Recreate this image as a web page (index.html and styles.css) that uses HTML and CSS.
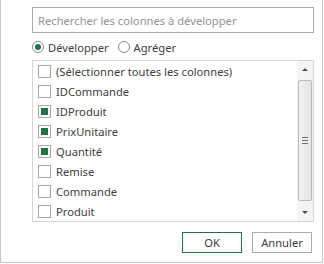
FILE: index.html
```html
<!DOCTYPE html>
<html>
<head>
  <meta charset="utf-8">
  <title>Développer les colonnes</title>
  <link rel="stylesheet" href="styles.css">
</head>
<body>
  <div class="dialog">
    <input type="text" class="search" placeholder="Rechercher les colonnes à développer">

    <!-- Choix du mode -->
    <div class="mode-row">
      <label class="radio"><span class="radio-dot checked"></span>Développer</label>
      <label class="radio"><span class="radio-dot"></span>Agréger</label>
    </div>

    <!-- Liste des colonnes -->
    <div class="column-list">
      <div class="items">
        <div class="item"><span class="box"></span>(Sélectionner toutes les colonnes)</div>
        <div class="item"><span class="box"></span>IDCommande</div>
        <div class="item"><span class="box checked"></span>IDProduit</div>
        <div class="item"><span class="box checked"></span>PrixUnitaire</div>
        <div class="item"><span class="box checked"></span>Quantité</div>
        <div class="item"><span class="box"></span>Remise</div>
        <div class="item"><span class="box"></span>Commande</div>
        <div class="item"><span class="box"></span>Produit</div>
      </div>
      <div class="scrollbar">
        <div class="arrow up"></div>
        <div class="track">
          <div class="thumb"><span class="grip"></span></div>
        </div>
        <div class="arrow down"></div>
      </div>
    </div>

    <div class="button-row">
      <button class="btn primary">OK</button>
      <button class="btn">Annuler</button>
    </div>
  </div>
</body>
</html>
```

FILE: styles.css
```css
/* Styles CSS */
body {
  margin: 0;
  background-color: #fff;
  font-family: "Noto Sans", "Open Sans", sans-serif;
  font-size: 11.2px;
  color: #404040;
}

.dialog {
  box-sizing: border-box;
  width: 323px;
  height: 263px;
  padding: 7px 10px 0 31px;
  border: 1px solid #c6c6c6;
  border-top: none;
}

.search {
  box-sizing: border-box;
  display: block;
  width: 282px;
  height: 26px;
  margin: 0;
  padding: 0 5px;
  border: 1px solid #ababab;
  font-family: inherit;
  font-size: 11.2px;
  outline: none;
}

.search::placeholder {
  color: #939393;
}

.mode-row {
  display: flex;
  align-items: center;
  height: 16px;
  margin-top: 6px;
}

.radio {
  display: flex;
  align-items: center;
  margin-right: 9px;
}

.radio-dot {
  box-sizing: border-box;
  width: 12px;
  height: 12px;
  margin-right: 4px;
  border: 1px solid #8a8a8a;
  border-radius: 50%;
  display: flex;
  align-items: center;
  justify-content: center;
}

.radio-dot.checked::after {
  content: "";
  width: 6px;
  height: 6px;
  border-radius: 50%;
  background-color: #217346;
}

.column-list {
  box-sizing: border-box;
  display: flex;
  width: 282px;
  height: 162px;
  margin-top: 5px;
  border: 1px solid #d6d6d6;
  overflow: hidden;
}

.items {
  flex: 1;
  padding: 0 0 0 5px;
}

.item {
  display: flex;
  align-items: center;
  height: 20px;
  white-space: nowrap;
}

.box {
  box-sizing: border-box;
  width: 13px;
  height: 13px;
  margin-right: 5px;
  border: 1px solid #a6a6a6;
  display: flex;
  align-items: center;
  justify-content: center;
  flex-shrink: 0;
}

.box.checked::after {
  content: "";
  width: 7px;
  height: 7px;
  background-color: #217346;
}

.scrollbar {
  width: 16px;
  display: flex;
  flex-direction: column;
  background-color: #f4f4f4;
}

.arrow {
  height: 17px;
  display: flex;
  align-items: center;
  justify-content: center;
}

.arrow.up::after {
  content: "";
  border-left: 3px solid transparent;
  border-right: 3px solid transparent;
  border-bottom: 3px solid #505050;
}

.arrow.down::after {
  content: "";
  border-left: 3px solid transparent;
  border-right: 3px solid transparent;
  border-top: 3px solid #505050;
}

.track {
  flex: 1;
  padding: 2px 1px 3px 1px;
}

.thumb {
  box-sizing: border-box;
  height: 100%;
  border: 1px solid #b9b9b9;
  border-radius: 2px;
  background: linear-gradient(to right, #f2f2f2, #e4e4e4);
  display: flex;
  align-items: center;
  justify-content: center;
}

.grip {
  width: 6px;
  height: 5px;
  border-top: 1px solid #707070;
  border-bottom: 1px solid #707070;
  background: linear-gradient(#707070, #707070) center / 100% 1px no-repeat;
}

.button-row {
  display: flex;
  justify-content: flex-end;
  margin-top: 10px;
}

.btn {
  box-sizing: border-box;
  width: 60px;
  height: 21px;
  margin-left: 10px;
  padding: 0;
  border: 1px solid #acacac;
  background-color: #fff;
  font-family: inherit;
  font-size: 11.2px;
  color: #404040;
}

.btn.primary {
  border-color: #217346;
}
```
